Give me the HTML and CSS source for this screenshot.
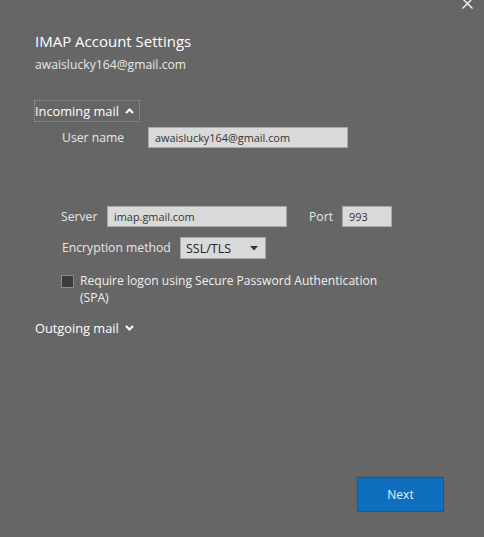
FILE: index.html
```html
<!DOCTYPE html>
<html lang="en">
<head>
<meta charset="utf-8">
<title>IMAP Account Settings</title>
<link rel="stylesheet" href="styles.css">
</head>
<body>
<div class="dialog">
  <button class="close" aria-label="Close">
    <svg width="11" height="11" viewBox="0 0 11 11"><path d="M0.5 0.5 L10.5 10.5 M10.5 0.5 L0.5 10.5" stroke="#ffffff" stroke-width="1.3" fill="none"/></svg>
  </button>
  <h1 class="title">IMAP Account Settings</h1>
  <div class="account">awaislucky164@gmail.com</div>

  <div class="section-toggle focused">Incoming mail
    <svg class="chev" width="9" height="6" viewBox="0 0 9 6"><path d="M1 5 L4.5 1.5 L8 5" stroke="#ffffff" stroke-width="2" fill="none"/></svg>
  </div>

  <div class="section">
    <div class="row row-user">
      <span class="label label-user">User name</span>
      <div class="field field-user">awaislucky164@gmail.com</div>
    </div>

    <div class="row row-server">
      <span class="label label-server">Server</span>
      <div class="field field-server">imap.gmail.com</div>
      <span class="label label-port">Port</span>
      <div class="field field-port">993</div>
    </div>

    <div class="row row-enc">
      <span class="label label-enc">Encryption method</span>
      <div class="select">
        <span class="select-text">SSL/TLS</span>
        <svg class="select-arrow" width="8" height="5" viewBox="0 0 8 5"><path d="M0 0 L8 0 L4 4.5 Z" fill="#333333"/></svg>
      </div>
    </div>

    <div class="check-row">
      <span class="checkbox"></span>
      <span class="check-label">Require logon using Secure Password Authentication (SPA)</span>
    </div>
  </div>

  <div class="section-toggle">Outgoing mail
    <svg class="chev" width="9" height="6" viewBox="0 0 9 6"><path d="M1 1 L4.5 4.5 L8 1" stroke="#ffffff" stroke-width="2" fill="none"/></svg>
  </div>

  <div class="footer">
    <button class="next">Next</button>
  </div>
</div>
</body>
</html>
```

FILE: styles.css
```css
html, body {
  margin: 0;
  padding: 0;
  background: #666666;
}

body {
  font-family: "Open Sans", "Noto Sans", sans-serif;
  color: #ffffff;
  width: 484px;
  height: 537px;
  overflow: hidden;
}

.dialog {
  position: relative;
  padding: 30px 0 0 35px;
  height: 507px;
  box-sizing: border-box;
}

.close {
  position: absolute;
  top: -2px;
  right: 11px;
  background: none;
  border: 0;
  padding: 0;
  width: 11px;
  height: 11px;
  display: block;
}
.close svg { display: block; }

.title {
  margin: 0;
  font-size: 15px;
  font-weight: 400;
  line-height: 22px;
  color: #ffffff;
}

.account {
  margin-top: 4px;
  font-size: 12.2px;
  line-height: 18px;
  color: #e6e6e6;
}

.section-toggle {
  display: inline-flex;
  align-items: center;
  gap: 6px;
  font-size: 12.8px;
  line-height: 18px;
  color: #ffffff;
  padding: 1px 5px 1px 0;
  border: 1px dotted transparent;
  margin-left: -1px;
}
.section-toggle.focused {
  margin-top: 26px;
  border-color: #9a9a9a;
}

.chev { display: block; }

.section {
  padding-left: 27px;
}

.row {
  display: flex;
  align-items: center;
  font-size: 12.2px;
  color: #e6e6e6;
}

.label {
  line-height: 18px;
  flex: none;
}

.row-user {
  margin-top: 5px;
}
.label-user { width: 86px; }

.field {
  box-sizing: border-box;
  height: 21px;
  background: #d9d9d9;
  border: 1px solid #a8a8a8;
  color: #333333;
  font-size: 10.9px;
  line-height: 19px;
  padding-left: 6px;
}

.field-user { width: 200px; }

.row-server {
  margin-top: 58px;
}
.label-server { width: 46px; margin-left: -1px; }
.field-server { width: 180px; }
.label-port { width: 33px; margin-left: 22px; }
.field-port { width: 50px; }

.row-enc {
  margin-top: 10px;
}
.label-enc { width: 118px; }

.select {
  box-sizing: border-box;
  width: 86px;
  height: 22px;
  background: #d9d9d9;
  border: 1px solid #a8a8a8;
  display: flex;
  align-items: center;
  justify-content: space-between;
  padding: 0 7px 0 5px;
  color: #222222;
  font-size: 12.5px;
}
.select-arrow { display: block; }

.check-row {
  display: flex;
  align-items: flex-start;
  gap: 6px;
  margin-top: 15px;
  width: 330px;
}

.checkbox {
  flex: none;
  box-sizing: border-box;
  width: 13px;
  height: 13px;
  margin-top: 1px;
  margin-left: -1px;
  background: #3c3c3c;
  border: 1px solid #8c8c8c;
}

.check-label {
  font-size: 12.1px;
  line-height: 17px;
  color: #f0f0f0;
  margin-top: -2px;
}

.section + .section-toggle {
  margin-top: 11px;
}

.footer {
  display: flex;
  justify-content: flex-end;
  padding-right: 40px;
  margin-top: 138px;
}

.next {
  box-sizing: border-box;
  width: 87px;
  height: 35px;
  background: #106ebe;
  border: 1px solid #0b5aa6;
  color: #e8f0f8;
  font-family: "Open Sans", "Noto Sans", sans-serif;
  font-size: 12px;
  padding: 0;
}
```
